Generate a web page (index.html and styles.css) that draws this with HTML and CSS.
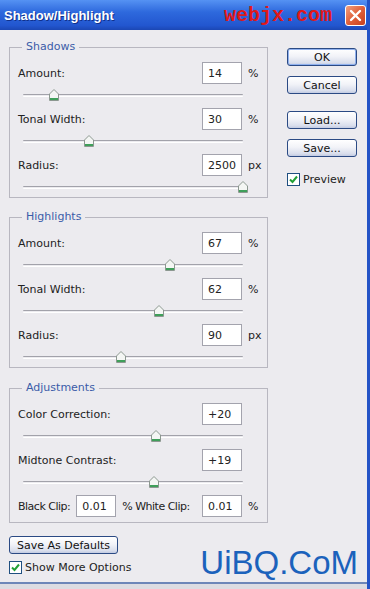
FILE: index.html
```html
<!DOCTYPE html>
<html>
  <head>
    <title>Shadow/Highlight</title>
    <link rel="stylesheet" href="styles.css">
  </head>
  <body>
    <div class="window">
      <!-- Title bar -->
      <div class="titlebar">
        <span class="title">Shadow/Highlight</span>
        <span class="mark">webjx.com</span>
        <span class="close">
          <svg width="13" height="13" viewBox="0 0 13 13"><path d="M2 2 L11 11 M11 2 L2 11" stroke="#fff" stroke-width="2.4" stroke-linecap="round"/></svg>
        </span>
      </div>

      <div class="content">
        <div class="main">
          <!-- Shadows -->
          <fieldset class="group">
            <legend>Shadows</legend>
            <div class="row"><label>Amount:</label><input type="text" value="14"><span class="unit">%</span></div>
            <div class="slider"><div class="track"><span class="thumb" style="left:14%"><svg width="10" height="12" viewBox="0 0 10 12"><path d="M0.5 5 L5 0.5 L9.5 5 L9.5 11.5 L0.5 11.5 Z" fill="#f4f6f4" stroke="#8c9890"/><path d="M1 10 L9 10" stroke="#3f9f5a" stroke-width="2"/></svg></span></div></div>
            <div class="row"><label>Tonal Width:</label><input type="text" value="30"><span class="unit">%</span></div>
            <div class="slider"><div class="track"><span class="thumb" style="left:30%"><svg width="10" height="12" viewBox="0 0 10 12"><path d="M0.5 5 L5 0.5 L9.5 5 L9.5 11.5 L0.5 11.5 Z" fill="#f4f6f4" stroke="#8c9890"/><path d="M1 10 L9 10" stroke="#3f9f5a" stroke-width="2"/></svg></span></div></div>
            <div class="row"><label>Radius:</label><input type="text" value="2500"><span class="unit">px</span></div>
            <div class="slider"><div class="track"><span class="thumb" style="left:100%"><svg width="10" height="12" viewBox="0 0 10 12"><path d="M0.5 5 L5 0.5 L9.5 5 L9.5 11.5 L0.5 11.5 Z" fill="#f4f6f4" stroke="#8c9890"/><path d="M1 10 L9 10" stroke="#3f9f5a" stroke-width="2"/></svg></span></div></div>
          </fieldset>

          <!-- Highlights -->
          <fieldset class="group">
            <legend>Highlights</legend>
            <div class="row"><label>Amount:</label><input type="text" value="67"><span class="unit">%</span></div>
            <div class="slider"><div class="track"><span class="thumb" style="left:67%"><svg width="10" height="12" viewBox="0 0 10 12"><path d="M0.5 5 L5 0.5 L9.5 5 L9.5 11.5 L0.5 11.5 Z" fill="#f4f6f4" stroke="#8c9890"/><path d="M1 10 L9 10" stroke="#3f9f5a" stroke-width="2"/></svg></span></div></div>
            <div class="row"><label>Tonal Width:</label><input type="text" value="62"><span class="unit">%</span></div>
            <div class="slider"><div class="track"><span class="thumb" style="left:62%"><svg width="10" height="12" viewBox="0 0 10 12"><path d="M0.5 5 L5 0.5 L9.5 5 L9.5 11.5 L0.5 11.5 Z" fill="#f4f6f4" stroke="#8c9890"/><path d="M1 10 L9 10" stroke="#3f9f5a" stroke-width="2"/></svg></span></div></div>
            <div class="row"><label>Radius:</label><input type="text" value="90"><span class="unit">px</span></div>
            <div class="slider"><div class="track"><span class="thumb" style="left:44.5%"><svg width="10" height="12" viewBox="0 0 10 12"><path d="M0.5 5 L5 0.5 L9.5 5 L9.5 11.5 L0.5 11.5 Z" fill="#f4f6f4" stroke="#8c9890"/><path d="M1 10 L9 10" stroke="#3f9f5a" stroke-width="2"/></svg></span></div></div>
          </fieldset>

          <!-- Adjustments -->
          <fieldset class="group adjust">
            <legend>Adjustments</legend>
            <div class="row"><label>Color Correction:</label><input type="text" value="+20"><span class="unit"></span></div>
            <div class="slider"><div class="track"><span class="thumb" style="left:60.5%"><svg width="10" height="12" viewBox="0 0 10 12"><path d="M0.5 5 L5 0.5 L9.5 5 L9.5 11.5 L0.5 11.5 Z" fill="#f4f6f4" stroke="#8c9890"/><path d="M1 10 L9 10" stroke="#3f9f5a" stroke-width="2"/></svg></span></div></div>
            <div class="row"><label>Midtone Contrast:</label><input type="text" value="+19"><span class="unit"></span></div>
            <div class="slider"><div class="track"><span class="thumb" style="left:59.5%"><svg width="10" height="12" viewBox="0 0 10 12"><path d="M0.5 5 L5 0.5 L9.5 5 L9.5 11.5 L0.5 11.5 Z" fill="#f4f6f4" stroke="#8c9890"/><path d="M1 10 L9 10" stroke="#3f9f5a" stroke-width="2"/></svg></span></div></div>
            <div class="row clip-row">
              <span class="tight">Black Clip:</span><input type="text" class="clip" value="0.01">
              <span class="tight clip-mid">% White Clip:</span><input type="text" class="clip white" value="0.01">
              <span class="unit">%</span>
            </div>
          </fieldset>
        </div>

        <!-- Dialog buttons -->
        <div class="side">
          <button class="btn default">OK</button>
          <button class="btn">Cancel</button>
          <button class="btn load">Load...</button>
          <button class="btn">Save...</button>
          <div class="check preview">
            <span class="box"><svg width="11" height="11" viewBox="0 0 11 11"><path d="M2 5.5 L4.5 8 L9 2.5" fill="none" stroke="#21a035" stroke-width="2"/></svg></span>
            <span>Preview</span>
          </div>
        </div>
      </div>

      <div class="footer">
        <div class="footer-left">
          <button class="btn wide">Save As Defaults</button>
          <div class="check">
            <span class="box"><svg width="11" height="11" viewBox="0 0 11 11"><path d="M2 5.5 L4.5 8 L9 2.5" fill="none" stroke="#21a035" stroke-width="2"/></svg></span>
            <span>Show More Options</span>
          </div>
        </div>
        <span class="logo">UiBQ.CoM</span>
      </div>
      <div class="frame-bottom"></div>
    </div>
  </body>
</html>
```

FILE: styles.css
```css
body {
  margin: 0;
  background-color: #ecebef;
  font-family: "DejaVu Sans", sans-serif;
  font-size: 11px;
  color: #222;
}
.window {
  width: 370px;
  height: 589px;
  box-sizing: border-box;
  display: flex;
  flex-direction: column;
  background-color: #ecebef;
  border-right: 3px solid #2453c6;
  overflow: hidden;
}
/* Title bar */
.titlebar {
  height: 30px;
  flex: none;
  display: flex;
  align-items: center;
  padding: 0 1px 0 4px;
  background: linear-gradient(#5592f3, #2e69dd 40%, #2256cf 85%, #1b47b4);
  color: #ffffff;
}
.title {
  flex: 1;
  font: bold 13px "Liberation Sans", sans-serif;
  text-shadow: 1px 1px 0 #10308a;
}
.mark {
  font: bold 20px "Liberation Mono", monospace;
  color: #e01818;
  margin-right: 13px;
}
.close {
  width: 19px;
  height: 19px;
  display: flex;
  align-items: center;
  justify-content: center;
  border: 1px solid #ffffff;
  border-radius: 3px;
  background: linear-gradient(135deg, #f0a080, #e0603a 50%, #c8401e);
}
/* Main area */
.content {
  display: flex;
  padding: 10px 0 0 9px;
}
.main {
  width: 259px;
}
.group {
  margin: 0 0 12px 0;
  padding: 8px 1px 0 8px;
  border: 1px solid #b8b7c0;
  min-width: 0;
}
.group legend {
  color: #3b5ca8;
  padding: 0 4px;
  margin-left: 4px;
  line-height: 14px;
}
.row {
  display: flex;
  align-items: center;
  height: 22px;
}
.row label {
  flex: 1;
}
.row input {
  width: 40px;
  height: 22px;
  box-sizing: border-box;
  border: 1px solid #a3a3ad;
  padding: 0 0 0 5px;
  font: 11px "DejaVu Sans", sans-serif;
  color: #222;
  background-color: #ffffff;
}
.unit {
  width: 18px;
  margin-left: 6px;
}
.slider {
  height: 24px;
}
.slider:last-child {
  height: 21px;
}
.track {
  position: relative;
  top: 10px;
  margin: 0 23px 0 5px;
  height: 1px;
  border-top: 1px solid #a2a2aa;
  border-bottom: 1px solid #ffffff;
  border-radius: 1px;
}
.thumb {
  position: absolute;
  top: -6px;
  width: 10px;
  height: 12px;
  margin-left: -5px;
}
.thumb svg {
  display: block;
}
.adjust {
  margin-top: 13px;
  padding-bottom: 5px;
}
.tight {
  letter-spacing: -0.5px;
  white-space: nowrap;
}
.clip-row input.clip {
  margin-left: 6px;
}
.clip-row input.white {
  margin-left: auto;
}
.clip-mid {
  margin-left: 6px;
}
/* Right column buttons */
.side {
  width: 70px;
  margin-left: 19px;
  padding-top: 8px;
  display: flex;
  flex-direction: column;
}
.btn {
  height: 18px;
  padding: 0;
  border: 1px solid #2b4a84;
  border-radius: 3px;
  background: linear-gradient(#ffffff, #f2f3f8 45%, #d9deec 85%, #c2cbe2);
  font: 11px "DejaVu Sans", sans-serif;
  color: #111;
}
.side .btn {
  width: 70px;
  margin-bottom: 10px;
}
.btn.default {
  box-shadow: inset 0 0 0 1px #8fb0ee;
}
.side .load {
  margin-top: 7px;
}
.check {
  display: flex;
  align-items: center;
  gap: 3px;
}
.box {
  width: 13px;
  height: 13px;
  box-sizing: border-box;
  border: 1px solid #1f4f80;
  background-color: #ffffff;
  display: flex;
  align-items: center;
  justify-content: center;
}
.preview {
  margin-top: 6px;
}
/* Footer */
.footer {
  flex: 1;
  display: flex;
  padding: 1px 9px 0 9px;
}
.footer-left {
  display: flex;
  flex-direction: column;
  gap: 7px;
}
.btn.wide {
  width: 109px;
}
.logo {
  margin-left: auto;
  margin-top: 8px;
  font: 33px "Liberation Sans", sans-serif;
  color: #1b62bc;
}
.frame-bottom {
  height: 7px;
  flex: none;
  border-top: 2px solid #6d86b8;
  background-color: #dcdce2;
}
```
